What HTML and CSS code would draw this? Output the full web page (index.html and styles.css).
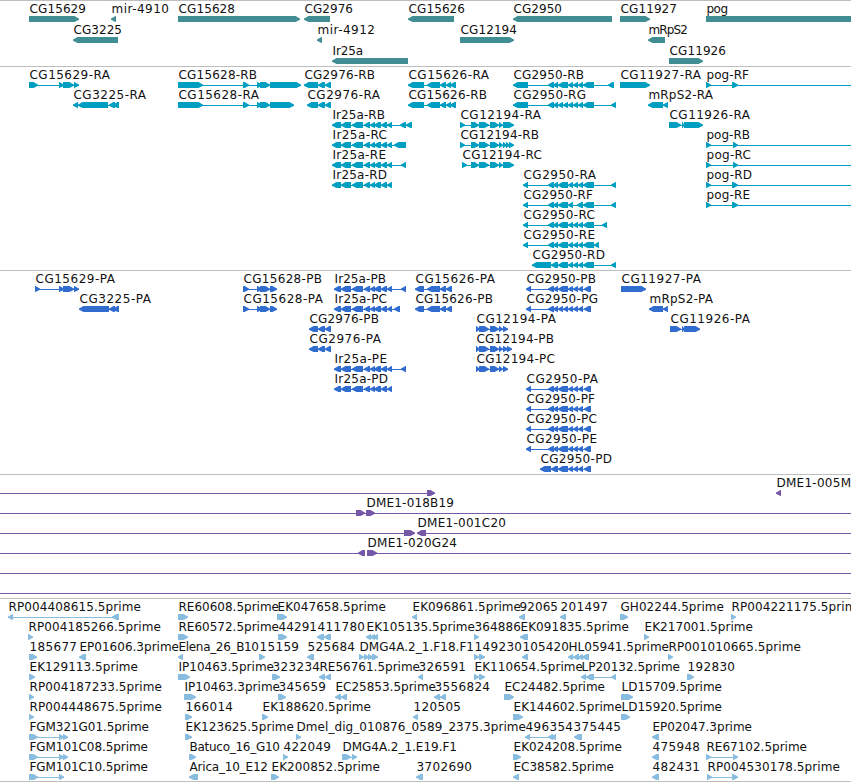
FILE: index.html
```
<!DOCTYPE html>
<html lang="en">

<head>
    <meta charset="UTF-8">
    <meta name="viewport" content="width=device-width, initial-scale=1.0">
    <title>Genome tracks</title>
    <link rel="stylesheet" href="styles.css">
</head>

<body>

    <div class="tracks">
        <div class="track genes" id="genes"></div>
        <div class="track transcripts" id="transcripts"></div>
        <div class="track proteins" id="proteins"></div>
        <div class="track bacs" id="bacs"></div>
        <div class="track ests" id="ests"></div>
    </div>

    <script src="tracks.js"></script>

</body>

</html>
```

FILE: styles.css
```
body {
    margin: 0;
    background-color: #fff;
}

.tracks {
    width: 851px;
    overflow: hidden;
    border-bottom: 1px solid #bebebe;
}

.track {
    display: flex;
    flex-direction: column;
    padding: 2px 0 1px;
    border-top: 1px solid #bebebe;
}

.row {
    display: block;
    width: 851px;
    height: 20px;
    overflow: visible;
}

.row text {
    font-family: "DejaVu Sans", sans-serif;
    font-size: 12px;
    fill: #111;
}

.genes {
    padding-bottom: 0;
    fill: #408e94;
}

.genes .row {
    height: 21px;
}

.transcripts {
    fill: #009fc1;
}

.proteins {
    fill: #316dce;
}

.bacs {
    fill: #7558a8;
}

.ests {
    padding-bottom: 0;
    fill: #88bde0;
}
```

FILE: tracks.js
```
// [label, label start, label end, strand, blocks]
const irBody = "341-351 352-363 364-370 370-375 374-381 381-387 387-392";
const cgBody = "548-554 553-558 558-568 568-573 573-578 578-583";

const data = {
    genes: [
        [
            ["CG15629", 29, 86, ">", "29-79"],
            ["mir-4910", 111, 169, "<", "111-116"],
            ["CG15628", 178, 235, ">", "178-300"],
            ["CG2976", 304, 353, "<", "304-330"],
            ["CG15626", 408, 465, "<", "408-454"],
            ["CG2950", 513, 562, "<", "513-612"],
            ["CG11927", 620, 677, ">", "620-650"],
            ["pog", 706, 728, ">", "706-870"]
        ],
        [
            ["CG3225", 73, 122, "<", "73-118"],
            ["mir-4912", 317, 375, "<", "317-322"],
            ["CG12194", 460, 517, ">", "460-514"],
            ["mRpS2", 648, 688, "<", "648-665"]
        ],
        [
            ["Ir25a", 332, 363, "<", "332-408"],
            ["CG11926", 669, 726, ">", "669-703"]
        ]
    ],
    transcripts: [
        [
            ["CG15629-RA", 29, 110, ">", "29-38 59-64 63-74 74-79"],
            ["CG15628-RB", 178, 257, ">", "178-203 243-249 257-262 260-270 270-301"],
            ["CG2976-RB", 304, 375, "<", "304-318 318-325 325-331"],
            ["CG15626-RA", 408, 489, "<", "408-424 427-440 440-446 446-451 450-456"],
            ["CG2950-RB", 513, 584, "<", "513-528 " + cgBody + " 583-594 608-614"],
            ["CG11927-RA", 620, 701, ">", "620-650"],
            ["pog-RF", 706, 749, ">", "706-711 732-738 900-905"]
        ],
        [
            ["CG3225-RA", 73, 146, "<", "73-78 78-108 109-115 113-119"],
            ["CG15628-RA", 178, 259, ">", "178-203 243-249 257-262 260-270 270-294"],
            ["CG2976-RA", 307, 380, "<", "307-318 318-325 325-331"],
            ["CG15626-RB", 408, 487, "<", "408-424 427-440 440-446 446-451 450-456"],
            ["CG2950-RG", 513, 586, "<", "513-528 548-554 553-558 558-563 563-568 568-573 573-578 578-583 583-594 611-616"],
            ["mRpS2-RA", 648, 713, "<", "648-663 663-668"]
        ],
        [
            ["Ir25a-RB", 332, 385, "<", "332-341 " + irBody + " 400-406 406-412"],
            ["CG12194-RA", 460, 541, ">", "460-465 471-479 479-489 490-499 499-503 503-514"],
            ["CG11926-RA", 669, 750, ">", "669-681 682-685 684-703"]
        ],
        [
            ["Ir25a-RC", 332, 387, "<", "332-341 " + irBody + " 394-406"],
            ["CG12194-RB", 460, 539, ">", "460-465 471-479 479-489 490-499 499-503 503-507 506-510 509-514"],
            ["pog-RB", 706, 750, ">", "706-711 733-738 900-905"]
        ],
        [
            ["Ir25a-RE", 332, 386, "<", "332-341 " + irBody + " 401-406"],
            ["CG12194-RC", 462, 542, ">", "462-467 471-479 479-489 490-499 499-503 503-514"],
            ["pog-RC", 706, 751, ">", "706-711 733-738 900-905"]
        ],
        [
            ["Ir25a-RD", 332, 387, "<", "332-341 " + irBody],
            ["CG2950-RA", 523, 596, "<", "523-528 " + cgBody + " 583-594 611-616"],
            ["pog-RD", 706, 752, ">", "706-711 732-738 900-905"]
        ],
        [
            ["CG2950-RF", 523, 593, "<", "523-528 548-554 553-558 558-568 568-573 577-583 583-594 611-616"],
            ["pog-RE", 706, 750, ">", "706-711 732-738 900-905"]
        ],
        [
            ["CG2950-RC", 523, 595, "<", "523-528 " + cgBody + " 583-594 602-607"]
        ],
        [
            ["CG2950-RE", 523, 595, "<", "523-528 " + cgBody + " 583-594 594-599"]
        ],
        [
            ["CG2950-RD", 532, 605, "<", "532-551 551-558 558-568 568-573 573-578 578-583 583-594 611-616"]
        ]
    ],
    proteins: [
        [
            ["CG15629-PA", 35, 115, ">", "35-40 59-64 63-74 74-79"],
            ["CG15628-PB", 243, 322, ">", "243-249 257-262 260-270 270-277"],
            ["Ir25a-PB", 334, 386, "<", "334-341 " + irBody + " 401-406"],
            ["CG15626-PA", 415, 495, "<", "415-424 427-440 440-446 446-452"],
            ["CG2950-PB", 526, 596, "<", "526-531 " + cgBody + " 584-591"],
            ["CG11927-PA", 621, 701, ">", "621-646"]
        ],
        [
            ["CG3225-PA", 79, 151, "<", "79-109 109-115 113-119"],
            ["CG15628-PA", 243, 323, ">", "243-249 257-262 260-270 270-277"],
            ["Ir25a-PC", 334, 387, "<", "334-341 " + irBody + " 394-400"],
            ["CG15626-PB", 415, 493, "<", "415-424 427-440 440-446 446-452"],
            ["CG2950-PG", 526, 598, "<", "526-531 548-554 553-558 558-563 563-568 568-573 573-578 578-583 584-591"],
            ["mRpS2-PA", 649, 713, "<", "649-663 663-668"]
        ],
        [
            ["CG2976-PB", 309, 379, "<", "309-318 318-325 325-331"],
            ["CG12194-PA", 476, 556, ">", "476-480 479-489 490-499 499-503 503-508"],
            ["CG11926-PA", 670, 750, ">", "670-681 682-685 684-700"]
        ],
        [
            ["CG2976-PA", 309, 381, "<", "309-318 318-325 325-331"],
            ["CG12194-PB", 476, 554, ">", "476-480 479-489 490-499 499-503 503-508 507-512"]
        ],
        [
            ["Ir25a-PE", 334, 387, "<", "334-341 " + irBody + " 401-406"],
            ["CG12194-PC", 476, 555, ">", "476-480 479-489 490-499 499-503 503-508"]
        ],
        [
            ["Ir25a-PD", 334, 388, "<", "334-341 " + irBody],
            ["CG2950-PA", 526, 598, "<", "526-531 " + cgBody + " 584-591"]
        ],
        [
            ["CG2950-PF", 526, 595, "<", "526-531 " + cgBody + " 584-591"]
        ],
        [
            ["CG2950-PC", 526, 597, "<", "526-531 " + cgBody + " 584-591"]
        ],
        [
            ["CG2950-PE", 526, 597, "<", "526-531 " + cgBody + " 584-591"]
        ],
        [
            ["CG2950-PD", 540, 612, "<", "540-551 551-558 558-568 568-573 573-578 578-583 584-591"]
        ]
    ],
    // BACs mostly run off both sides of the view
    bacs: [
        [
            ["", 0, 0, ">", "-20--10 427-435"],
            ["DME1-005M", 776, 851, "<", "776-781"]
        ],
        [
            ["DME1-018B19", 366, 454, ">", "-20--10 356-365 366-375 900-910"]
        ],
        [
            ["", 0, 0, ">", "-20--10 404-415"],
            ["DME1-001C20", 417, 506, "<", "417-426 900-910"]
        ],
        [
            ["", 0, 0, "<", "-20--10 358-365"],
            ["DME1-020G24", 367, 457, ">", "367-377 900-910"]
        ],
        [
            ["", 0, 0, ">", "-20--10 900-910"]
        ],
        [
            ["", 0, 0, ">", "-20--10 900-910"]
        ]
    ],
    ests: [
        [
            ["RP004408615.5prime", 8, 141, "<", "8-13 112-119"],
            ["RE60608.5prime", 178, 279, ">", "178-188"],
            ["EK047658.5prime", 277, 386, ">", "277-287"],
            ["EK096861.5prime", 412, 521, "<", "412-417"],
            ["92065", 519, 558, "<", "519-525"],
            ["201497", 560, 608, "<", "560-566"],
            ["GH02244.5prime", 620, 724, ">", "620-628"],
            ["RP004221175.5prime", 731, 864, ">", "731-736"]
        ],
        [
            ["RP004185266.5prime", 28, 161, ">", "28-33"],
            ["RE60572.5prime", 178, 279, ">", "178-188"],
            ["44291", 278, 317, ">", "278-287"],
            ["411780", 317, 365, "<", "317-324 324-331"],
            ["EK105135.5prime", 366, 475, "<", "366-371 370-375 373-378"],
            ["364886", 474, 521, ">", "474-479"],
            ["EK091835.5prime", 520, 629, "<", "520-528"],
            ["EK217001.5prime", 644, 753, ">", "644-649"]
        ],
        [
            ["185677", 29, 77, ">", "29-37"],
            ["EP01606.3prime", 79, 179, "<", "79-86"],
            ["Elena_26_B10", 178, 259, "<", "178-183"],
            ["15159", 259, 299, ">", "259-265"],
            ["525684", 307, 355, "<", "307-314"],
            ["DMG4A.2_1.F18.F1", 359, 474, ">", "359-364 364-369 368-373 372-378"],
            ["149230", 474, 522, ">", "474-479 479-485"],
            ["105420", 522, 569, "<", "522-528"],
            ["HL05941.5prime", 568, 669, "<", "568-573 573-579 578-583 582-589"],
            ["RP001010665.5prime", 668, 801, ">", "668-673"]
        ],
        [
            ["EK129113.5prime", 29, 138, ">", "29-35"],
            ["IP10463.5prime", 178, 274, ">", "178-190"],
            ["323234", 272, 320, ">", "272-280"],
            ["RE56761.5prime", 319, 420, "<", "319-325 325-331"],
            ["326591", 418, 466, "<", "418-423"],
            ["EK110654.5prime", 474, 583, ">", "474-479 479-485"],
            ["LP20132.5prime", 581, 680, "<", "581-586 586-594 611-616"],
            ["192830", 687, 735, ">", "687-694"]
        ],
        [
            ["RP004187233.5prime", 29, 162, ">", "29-34"],
            ["IP10463.3prime", 184, 280, ">", "184-196"],
            ["345659", 278, 326, ">", "278-286"],
            ["EC25853.5prime", 335, 436, "<", "335-341 341-347"],
            ["3556824", 434, 490, "<", "434-440 440-446"],
            ["EC24482.5prime", 504, 605, ">", "504-514"],
            ["LD15709.5prime", 621, 722, ">", "621-633"]
        ],
        [
            ["RP004448675.5prime", 29, 162, ">", "29-34"],
            ["166014", 185, 233, ">", "185-192"],
            ["EK188620.5prime", 262, 371, ">", "262-268"],
            ["120505", 413, 461, "<", "413-418"],
            ["EK144602.5prime", 513, 622, ">", "513-523"],
            ["LD15920.5prime", 621, 722, ">", "621-630"]
        ],
        [
            ["FGM321G01.5prime", 29, 149, ">", "29-38 59-64 63-68"],
            ["EK123625.5prime", 185, 294, ">", "185-192"],
            ["Dmel_dig_010876_0589_2375.3prime", 296, 526, ">", "296-301"],
            ["496354", 525, 573, "<", "525-530 548-553 551-556"],
            ["375445", 573, 621, "<", "574-582"],
            ["EP02047.3prime", 652, 752, "<", "652-659"]
        ],
        [
            ["FGM101C08.5prime", 29, 148, ">", "29-38 59-64 63-68"],
            ["Batuco_16_G10", 189, 280, ">", "189-196"],
            ["422049", 283, 331, ">", "283-288"],
            ["DMG4A.2_1.E19.F1", 342, 457, ">", "342-351 352-357"],
            ["EK024208.5prime", 513, 622, ">", "513-521"],
            ["475948", 652, 700, "<", "652-659"],
            ["RE67102.5prime", 706, 807, ">", "706-711 733-738"]
        ],
        [
            ["FGM101C10.5prime", 29, 148, ">", "29-38 59-64"],
            ["Arica_10_E12", 189, 268, "<", "189-198"],
            ["EK200852.5prime", 271, 380, ">", "271-279"],
            ["3702690", 416, 472, "<", "416-423"],
            ["EC38582.5prime", 513, 614, "<", "513-519"],
            ["482431", 652, 700, "<", "652-659"],
            ["RP004530178.5prime", 707, 840, ">", "707-712 732-738"]
        ]
    ]
};

const NS = "http://www.w3.org/2000/svg";

function add(parent, name, attrs) {
    const el = document.createElementNS(NS, name);
    for (const key in attrs) {
        el.setAttribute(key, attrs[key]);
    }
    parent.appendChild(el);
    return el;
}

// block with a blunt pointed end, 6px high
function blockPath(a, b, strand) {
    const head = Math.min(5, b - a);
    if (strand === ">") {
        return `M${a} 13H${b - head + 0.5}L${b - 1.5} 14.7L${b} 15.5V16.8L${b - 1.5} 17.5L${b - head + 0.5} 19H${a}Z`;
    }
    return `M${b} 13H${a + head - 0.5}L${a + 1.5} 14.7L${a} 15.5V16.8L${a + 1.5} 17.5L${a + head - 0.5} 19H${b}Z`;
}

function drawFeature(svg, [label, x, end, strand, blocks]) {
    const list = blocks.split(" ").map(s => s.match(/^(-?\d+)-(-?\d+)$/).slice(1).map(Number));
    const first = list[0][0];
    const last = list[list.length - 1][1];
    if (list.length > 1) {
        add(svg, "rect", { x: first, y: 16, width: last - first, height: 1 });
    }
    add(svg, "path", { d: list.map(([a, b]) => blockPath(a, b, strand)).join("") });
    if (label) {
        add(svg, "text", { x: x + 0.5, y: 10, textLength: end - x - 0.5 }).textContent = label;
    }
}

for (const id in data) {
    const track = document.getElementById(id);
    data[id].forEach(row => {
        const svg = add(track, "svg", { class: "row" });
        row.forEach(feature => drawFeature(svg, feature));
    });
}
```
